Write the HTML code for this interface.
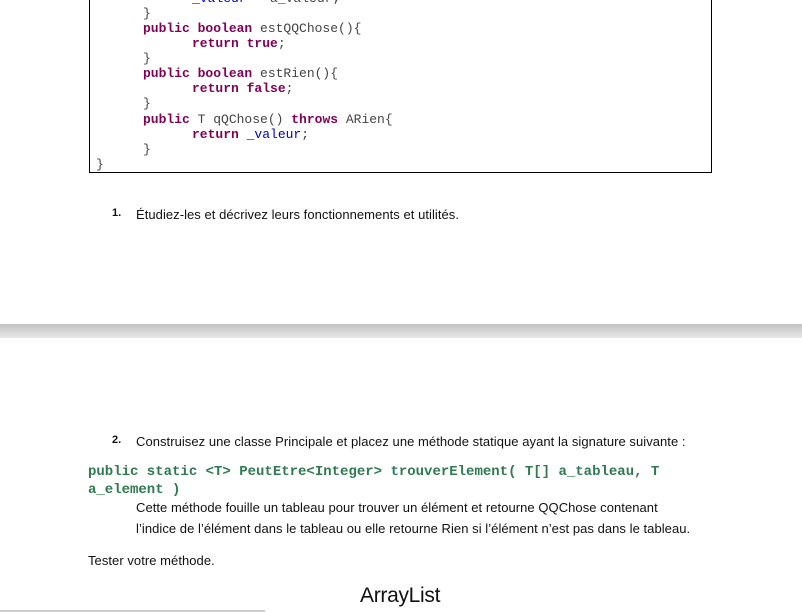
<!DOCTYPE html>
<html><head><meta charset="utf-8"><style>
body{margin:0;width:802px;height:612px;background:#fff;position:relative;overflow:hidden;font-family:"Liberation Sans",sans-serif;}
.a{position:absolute;white-space:pre;}
.c{font-family:"Liberation Mono",monospace;font-size:13px;color:#444;line-height:15px}
.k{color:#7f0055;font-weight:bold}
.v{color:#0000c0}
.t{font-size:13px;color:#111;letter-spacing:0.05px;}
.g{font-family:"Liberation Mono",monospace;font-size:14px;font-weight:bold;color:#2f7a50;}
</style></head><body>
<div class="a" style="left:89px;top:-2px;width:621px;height:174px;border-left:1px solid #000;border-right:1px solid #000;border-bottom:1px solid #000;"></div>
<div class="a c" style="left:192px;top:-9px"><span class="v">_valeur</span> = a_valeur;</div>
<div class="a c" style="left:143px;top:6px">}</div>
<div class="a c" style="left:143px;top:21px"><span class="k">public boolean</span> estQQChose(){</div>
<div class="a c" style="left:192px;top:36px"><span class="k">return true</span>;</div>
<div class="a c" style="left:143px;top:51px">}</div>
<div class="a c" style="left:143px;top:66px"><span class="k">public boolean</span> estRien(){</div>
<div class="a c" style="left:192px;top:81px"><span class="k">return false</span>;</div>
<div class="a c" style="left:143px;top:96px">}</div>
<div class="a c" style="left:143px;top:112px"><span class="k">public</span> T qQChose() <span class="k">throws</span> ARien{</div>
<div class="a c" style="left:192px;top:127px"><span class="k">return</span> <span class="v">_valeur</span>;</div>
<div class="a c" style="left:143px;top:142px">}</div>
<div class="a c" style="left:96px;top:157px">}</div>
<div class="a t" style="left:112px;top:207px;font-size:11px;font-weight:bold">1.</div>
<div class="a t" style="left:136px;top:207px">Étudiez-les et décrivez leurs fonctionnements et utilités.</div>
<div class="a" style="left:0;top:324px;width:802px;height:14px;background:linear-gradient(#c2c2c2,#e8e8e8);"></div>
<div class="a t" style="left:112px;top:434px;font-size:11px;font-weight:bold">2.</div>
<div class="a t" style="left:136px;top:434px">Construisez une classe Principale et placez une méthode statique ayant la signature suivante :</div>
<div class="a g" style="left:88px;top:464px">public static &lt;T&gt; PeutEtre&lt;Integer&gt; trouverElement( T[] a_tableau, T</div>
<div class="a g" style="left:88px;top:482px">a_element )</div>
<div class="a t" style="left:136px;top:500px">Cette méthode fouille un tableau pour trouver un élément et retourne QQChose contenant</div>
<div class="a t" style="left:136px;top:521px">l’indice de l’élément dans le tableau ou elle retourne Rien si l’élément n’est pas dans le tableau.</div>
<div class="a t" style="left:88px;top:553px">Tester votre méthode.</div>
<div class="a" style="left:360px;top:584px;font-size:21px;color:#111;letter-spacing:-0.3px">ArrayList</div>
<div class="a" style="left:0;top:610px;width:265px;height:2px;background:#ccc"></div>
</body></html>
